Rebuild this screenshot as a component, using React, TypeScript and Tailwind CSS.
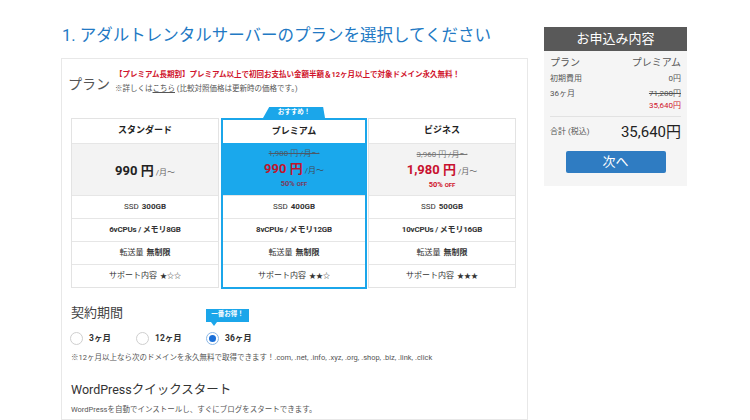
import React from "react";

const font = { fontFamily: '"Roboto", "Noto Sans CJK JP", sans-serif' };

type Plan = {
  name: string;
  ssd: string;
  cpu: string;
  mem: string;
  stars: string;
  was?: string;
  price: string;
};

const plans: Plan[] = [
  { name: "スタンダード", ssd: "300GB", cpu: "6vCPUs", mem: "8GB", stars: "★☆☆", price: "990" },
  { name: "プレミアム", ssd: "400GB", cpu: "8vCPUs", mem: "12GB", stars: "★★☆", was: "1,980", price: "990" },
  { name: "ビジネス", ssd: "500GB", cpu: "10vCPUs", mem: "16GB", stars: "★★★", was: "3,960", price: "1,980" },
];

function SpecRows({ plan }: { plan: Plan }) {
  const row = "h-[23px] flex items-center justify-center border-t border-[#e6e6e6] text-[8px] text-[#333]";
  return (
    <>
      <div className={row}>
        SSD <b className="ml-[3px] font-bold">{plan.ssd}</b>
      </div>
      <div className={row}>
        <b className="font-bold tracking-[-0.2px]">
          {plan.cpu} / メモリ{plan.mem}
        </b>
      </div>
      <div className={row}>
        転送量 <b className="ml-[3px] font-bold">無制限</b>
      </div>
      <div className={row}>
        サポート内容 <span className="ml-[3px] text-[7px]">{plan.stars}</span>
      </div>
    </>
  );
}

function PlanColumn({ plan }: { plan: Plan }) {
  return (
    <div className="w-[148px] border border-[#e3e3e3] bg-white flex flex-col">
      <div className="h-[24px] flex items-center justify-center text-[9px] font-bold text-[#222]">
        {plan.name}
      </div>
      <div className="h-[52px] border-t border-[#e6e6e6] bg-[#f3f3f3] flex flex-col items-center justify-center">
        {plan.was ? (
          <>
            <div className="text-[8px] leading-[12px] text-[#777] line-through">
              {plan.was} 円 /月〜
            </div>
            <div className="leading-[15px] text-[#c8102e]">
              <span className="text-[13px] font-bold">{plan.price} 円</span>
              <span className="text-[8px] text-[#666] ml-[2px]">/月〜</span>
            </div>
            <div className="text-[7.5px] leading-[12px] text-[#d0142c] font-bold">
              50% <span className="text-[6px]">OFF</span>
            </div>
          </>
        ) : (
          <div className="text-[#222]">
            <span className="text-[13px] font-bold">{plan.price} 円</span>
            <span className="text-[8px] text-[#666] ml-[2px]">/月〜</span>
          </div>
        )}
      </div>
      <SpecRows plan={plan} />
    </div>
  );
}

function FeaturedColumn({ plan }: { plan: Plan }) {
  return (
    <div className="relative w-[146px] border-2 border-[#1ba6ea] bg-white flex flex-col -mb-[2px]">
      <div className="absolute -top-[13px] left-[40px] w-[62px] h-[11px] bg-[#1ba6ea] [clip-path:polygon(10%_0,97%_0,100%_100%,0_100%)] flex items-center justify-center text-[6.5px] text-white font-bold">
        おすすめ！
      </div>
      <div className="h-[23px] flex items-center justify-center text-[9px] font-bold text-[#222]">
        {plan.name}
      </div>
      <div className="h-[52px] bg-[#1aa8ec] flex flex-col items-center justify-center">
        <div className="text-[8px] leading-[12px] text-[#4b5968] line-through">{plan.was} 円 /月〜</div>
        <div className="leading-[15px] text-[#c0142c]">
          <span className="text-[13px] font-bold">{plan.price} 円</span>
          <span className="text-[8px] text-[#3f4a56] ml-[2px]">/月〜</span>
        </div>
        <div className="text-[7.5px] leading-[12px] text-[#7d3a5c] font-bold">
          50% <span className="text-[6px]">OFF</span>
        </div>
      </div>
      <SpecRows plan={plan} />
    </div>
  );
}

function Radio({ label, checked, width }: { label: string; checked?: boolean; width: string }) {
  return (
    <div className={`relative flex items-center gap-[6px] ${width}`}>
      {checked && (
        <div className="absolute -top-[23px] left-0 w-[43px] h-[13px] bg-[#1ba6ea] text-white text-[6.5px] font-bold flex items-center justify-center">
          一番お得！
          <span className="absolute -bottom-[4px] left-[5px] w-0 h-0 border-l-[3px] border-r-[3px] border-t-[4px] border-l-transparent border-r-transparent border-t-[#1ba6ea]" />
        </div>
      )}
      <span
        className={
          checked
            ? "w-[13px] h-[13px] rounded-full border border-[#8cb8e6] bg-white flex items-center justify-center"
            : "w-[13px] h-[13px] rounded-full border border-[#cfcfcf] bg-white"
        }
      >
        {checked && <span className="w-[7px] h-[7px] rounded-full bg-[#1a6fd8]" />}
      </span>
      <span className="text-[8.5px] font-bold text-[#333]">{label}</span>
    </div>
  );
}

export default function App() {
  return (
    <div style={font} className="w-[750px] h-[420px] overflow-hidden bg-white flex">
      <main className="ml-[61px] w-[467px] flex flex-col">
        <h1 className="mt-[25px] pl-[1px] text-[16.5px] leading-[22px] text-[#2279c4]">
          1. アダルトレンタルサーバーのプランを選択してください
        </h1>
        <section className="mt-[11px] flex-1 border border-[#e8e8e8] pl-[9px] pr-[9px]">
          <div className="flex pt-[9px] -ml-[3px]">
            <div className="w-[47px] mt-[6px] text-[14px] leading-[20px] text-[#555]">プラン</div>
            <div className="text-[7.5px] leading-[14px]">
              <div className="text-[#d0142c] font-bold">
                【プレミアム長期割】プレミアム以上で初回お支払い金額半額＆12ヶ月以上で対象ドメイン永久無料！
              </div>
              <div className="text-[#555]">
                ※詳しくは<span className="underline">こちら</span> (比較対照価格は更新時の価格です。)
              </div>
            </div>
          </div>

          <div className="mt-[22px] flex items-start">
            <PlanColumn plan={plans[0]} />
            <div className="ml-[2px]">
              <FeaturedColumn plan={plans[1]} />
            </div>
            <div className="ml-[1px]">
              <PlanColumn plan={plans[2]} />
            </div>
          </div>

          <div className="mt-[15px] text-[13px] leading-[20px] text-[#444]">契約期間</div>
          <div className="mt-[8px] flex items-center h-[14px] -ml-[1px]">
            <Radio label="3ヶ月" width="w-[66px]" />
            <Radio label="12ヶ月" width="w-[70px]" />
            <Radio label="36ヶ月" width="w-[70px]" checked />
          </div>
          <div className="mt-[7px] text-[7.5px] leading-[12px] text-[#555]">
            ※12ヶ月以上なら次のドメインを永久無料で取得できます！.com, .net, .info, .xyz, .org, .shop, .biz, .link, .click
          </div>
          <div className="mt-[16px] text-[12.5px] leading-[20px] text-[#333]">WordPressクイックスタート</div>
          <div className="mt-[4px] text-[7.5px] leading-[12px] text-[#555]">
            WordPressを自動でインストールし、すぐにブログをスタートできます。
          </div>
        </section>
      </main>

      <aside className="ml-[16px] mt-[27px] w-[143px] self-start">
        <div className="h-[24px] bg-[#595959] flex items-center justify-center text-[13px] text-white">
          お申込み内容
        </div>
        <div className="bg-[#f5f5f5] px-[6px] pt-[5px] pb-[13px] text-[#555]">
          <div className="flex justify-between text-[10px] leading-[14px]">
            <span>プラン</span>
            <span>プレミアム</span>
          </div>
          <div className="mt-[3px] flex justify-between text-[8px] leading-[12px]">
            <span>初期費用</span>
            <span>0円</span>
          </div>
          <div className="mt-[3px] flex justify-between text-[8px] leading-[12px]">
            <span>36ヶ月</span>
            <div className="flex flex-col items-end">
              <span className="line-through">71,280円</span>
              <span className="text-[#d0142c]">35,640円</span>
            </div>
          </div>
          <div className="mt-[4px] border-t border-[#e2e2e2]" />
          <div className="mt-[6px] flex justify-between items-center h-[18px]">
            <span className="text-[8px]">合計 (税込)</span>
            <span className="text-[15px] text-[#222]">35,640円</span>
          </div>
          <div className="mt-[10px] flex justify-center">
            <button className="w-[100px] h-[22px] bg-[#2f7cc2] rounded-[2px] text-white text-[13px] leading-[22px]">
              次へ
            </button>
          </div>
        </div>
      </aside>
    </div>
  );
}
